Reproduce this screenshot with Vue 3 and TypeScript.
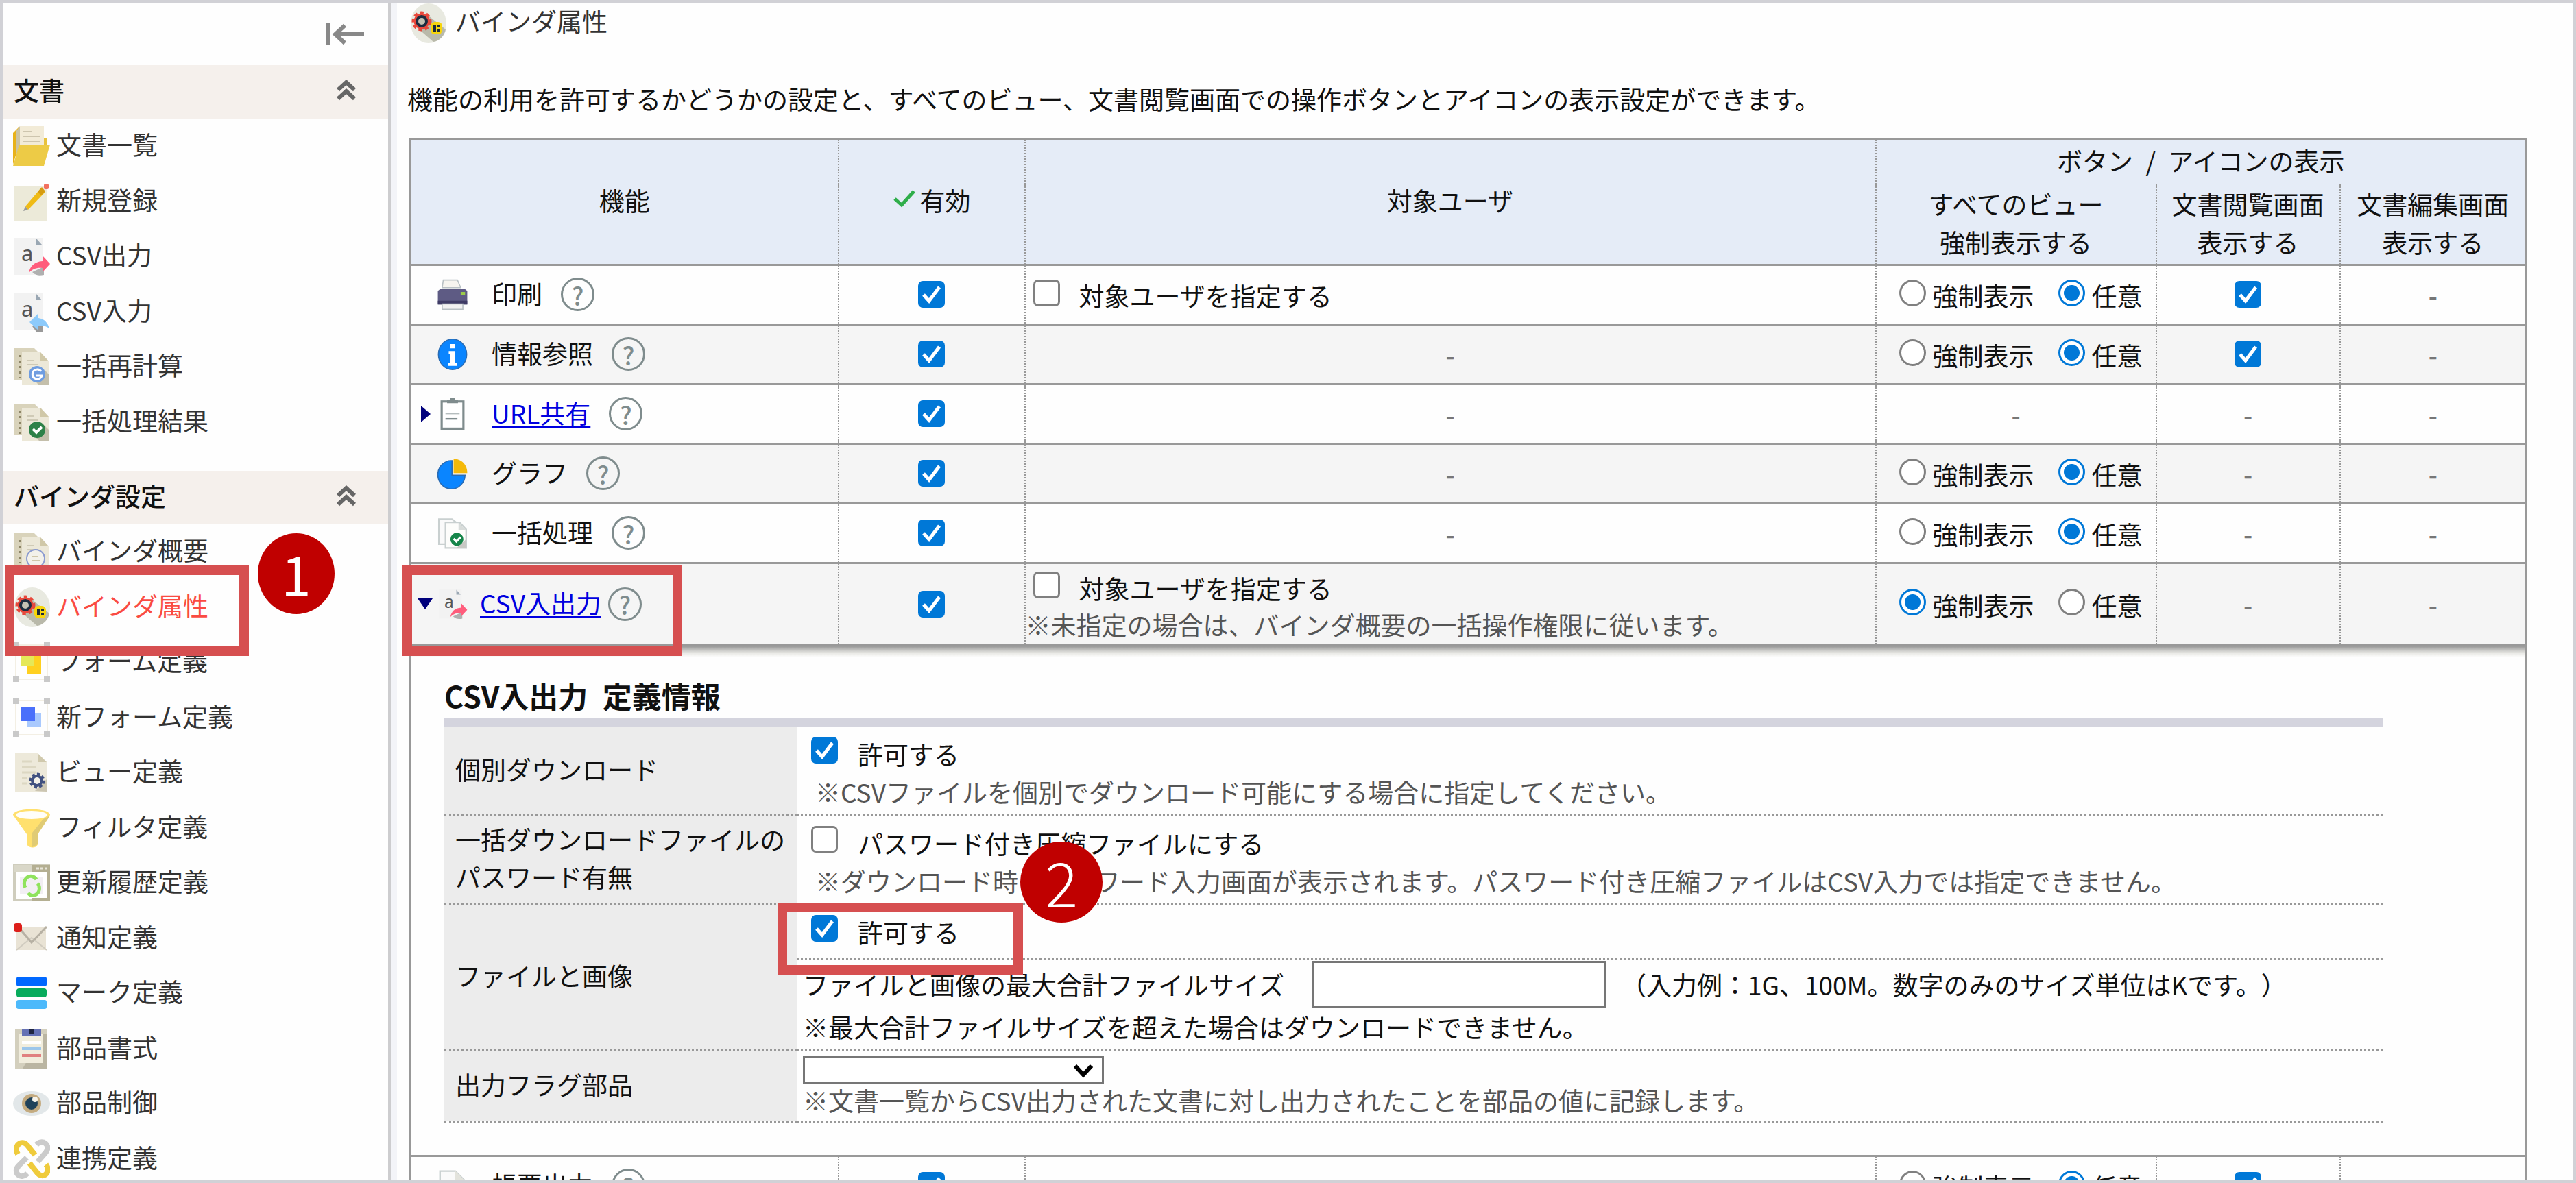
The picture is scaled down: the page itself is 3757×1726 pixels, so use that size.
<script setup lang="ts">
import { ref } from 'vue'

interface NavItem {
  label: string
  icon: string
  active?: boolean
}
interface NavGroup {
  title: string
  items: NavItem[]
}
interface Feature {
  id: string
  label: string
  icon: string
  link?: boolean
  open?: boolean
  targetable?: boolean
  note?: string
  display?: 'force' | 'free'
  viewer?: boolean
}

const docBack =
  '<path d="M2 2h29l8 8v38H2z" fill="#d9d3bb"/><path d="M13 8h27l12 13v35H13z" fill="#ece8d8"/><path d="M40 8v13h12z" fill="#d0c8a8"/><path d="M10 12v34" stroke="#8d8566" stroke-width="3" stroke-dasharray="3 5"/><path d="M20 20h11M20 26h16" stroke="#cfcab6" stroke-width="2"/>'
const page =
  '<rect x="2" y="2" width="42" height="54" fill="#f2f2f2"/><path d="M34 3l8 9h-8z" fill="#9aa7b3"/><text x="12" y="36" font-size="31" font-family="Noto Sans, sans-serif" fill="#555">a</text>'
const corners =
  '<rect x="4" y="4" width="46" height="50" fill="none" stroke="#f3efe4" stroke-width="2"/><path d="M0 0h9v9H0zM45 0h9v9h-9zM0 49h9v9H0zM45 49h9v9h-9z" fill="#c9c9c9"/>'
const csvOut =
  page + '<path d="M28 52c6 6 12 5 17 4V44z" fill="#b0b0b0"/><path d="M23 53c2-10 8-16 20-17v-8l11 12-11 12v-6c-8-1-14 1-20 7z" fill="#ff5d7c"/>'

const icons: Record<string, string> = {
  folder:
    '<path d="M0 10l8-8v28L0 56z" fill="#e8b21a"/><path d="M44 18h6v12h-6z" fill="#e8c23c"/><path d="M10 0h35v32H10z" fill="#f2ebd7"/><path d="M10 0v28l-6 16V8z" fill="#cbc3a4"/><path d="M15 8h13M15 15h25M15 22h25" stroke="#cdc5ae" stroke-width="2"/><path d="M9 27h45l-9 31H0z" fill="#edcb46"/>',
  pencil:
    '<rect x="2" y="6" width="47" height="51" fill="#ecead9"/><path d="M15 43l3-7 4 5z" fill="#999"/><path d="M18 36L41 9l6 6-25 26z" fill="#efbb16"/><path d="M36 15l6-7 5 6-6 6z" fill="#d69c12"/><rect x="45" y="3" width="7" height="8" rx="2" fill="#f2705f"/>',
  csvOut,
  csvIn:
    page + '<path d="M28 50h16v8H34z" fill="#999"/><path d="M24 44l13-13v7c9 1 14 8 16 15-6-4-10-4-16-3v6z" fill="#8ccafb"/>',
  recalc:
    docBack +
    '<path d="M34 52l12-18 6 6v16H38z" fill="#c4bfab"/><circle cx="35" cy="40" r="12" fill="#6f9de0"/><path d="M41 36a7 7 0 1 0 1 6h-8" fill="none" stroke="#fff" stroke-width="3"/>',
  result:
    docBack +
    '<path d="M34 52l12-18 6 6v16H38z" fill="#c4bfab"/><circle cx="35" cy="40" r="12" fill="#2d8148"/><path d="M29 39l5 5 8-8" fill="none" stroke="#fff" stroke-width="4"/>',
  overview:
    docBack +
    '<circle cx="33" cy="39" r="13" fill="#f3f1ea" stroke="#8b9bd0" stroke-width="2"/><path d="M27 36h9M28 42h12" stroke="#cfc6a8" stroke-width="2"/><path d="M42 48l7 8" stroke="#8b9bd0" stroke-width="3"/>',
  gear:
    '<ellipse cx="28" cy="29" rx="26" ry="29" fill="#e8e9e0"/><path d="M12 36l16-18 25 20c-1 8-9 17-18 18z" fill="#b9b9aa"/><circle cx="18" cy="26" r="12" fill="none" stroke="#e8483c" stroke-width="5" stroke-dasharray="5 4"/><circle cx="18" cy="26" r="9" fill="#c9c6b8" stroke="#e8483c" stroke-width="5"/><circle cx="18" cy="26" r="7" fill="#c4c1b3" stroke="#1c2c40" stroke-width="4"/><rect x="31" y="27" width="17" height="18" rx="6" fill="#f7d50c"/><path d="M35 31h4v10h-4zM41 31h4v4h-4zM41 37h4v4h-4z" fill="#1c2a3a"/>',
  form: corners + '<path d="M20 20h21v26H20z" fill="#ffd01f"/><path d="M12 12h19v22H12z" fill="#e5e858"/>',
  newForm: corners + '<path d="M20 22h21v20H20z" fill="#a9c9fd"/><path d="M11 13h21v21H11z" fill="#4a70fb"/>',
  view:
    '<path d="M3 1h33l13 13v43H3z" fill="#ede9da"/><path d="M36 1v13h13z" fill="#d0c9ad"/><path d="M13 13h15M13 21h20M13 29h20M13 37h8M13 45h8" stroke="#dcd7c2" stroke-width="3"/><path d="M32 56l17-17v18z" fill="#ccc6b2"/><circle cx="35" cy="41" r="9" fill="none" stroke="#415180" stroke-width="5" stroke-dasharray="4 3"/><circle cx="35" cy="41" r="7" fill="#f4f2ea" stroke="#415180" stroke-width="4"/>',
  filter:
    '<path d="M0 10c0-11 54-11 54 0L36 38v15c-2 6-12 6-16 0V38z" fill="#ffe06e"/><path d="M54 11L36 38v15l-8 4V36L44 16z" fill="#e0cb74"/><ellipse cx="27" cy="10" rx="23" ry="6" fill="#fffef8"/>',
  history:
    '<rect x="2" y="4" width="50" height="50" fill="#fff" stroke="#cfcdbd" stroke-width="4"/><path d="M1 3h53v10H1z" fill="#d9d7c8"/><path d="M28 3h26v10H28zM49 13h5v42h-5zM28 51h26v4H28z" fill="#b4af92"/><path d="M34 8h15" stroke="#e8e6da" stroke-width="3" stroke-dasharray="4 2"/><path d="M10 20h34v26H10z" fill="#f2eff3"/><path d="M18 36a9 10 0 0 1 16-12M36 30a9 10 0 0 1-14 14" fill="none" stroke="#8fe35c" stroke-width="5"/>',
  mail:
    '<path d="M4 12h44v34H4z" fill="#e9e3d5"/><path d="M5 46l22-18 22 18" fill="none" stroke="#d1ccc0" stroke-width="2"/><path d="M8 13l19 22 22-23" fill="none" stroke="#b7b1a4" stroke-width="3"/><rect x="1" y="7" width="12" height="13" rx="4" fill="#dd1f1a"/>',
  mark:
    '<rect x="5" y="5" width="44" height="14" rx="3" fill="#0068ff"/><rect x="5" y="22" width="44" height="13" rx="4" fill="#08ab5c"/><rect x="5" y="39" width="44" height="13" rx="3" fill="#4cb9fb"/>',
  format:
    '<path d="M3 1h47v57H3z" fill="#d3cfbd"/><path d="M44 7h6v51H14z" fill="#bab5a2"/><path d="M9 7h35v43H9z" fill="#f1eddd"/><path d="M13 0h28v10H13z" fill="#6571b4"/><circle cx="27" cy="4" r="4" fill="#1f2540"/><path d="M13 20h28" stroke="#fff" stroke-width="4"/><path d="M13 29h28" stroke="#9cc6ea" stroke-width="4"/><path d="M13 39h28" stroke="#e08080" stroke-width="4"/>',
  eye:
    '<ellipse cx="27" cy="29" rx="27" ry="18" fill="#e2e7e9"/><circle cx="27" cy="29" r="14" fill="#c4ab80"/><circle cx="27" cy="29" r="9" fill="#20425a"/><circle cx="32" cy="23" r="4" fill="#f6f3ea"/>',
  link:
    '<path d="M36 33L48 19c8-11-6-20-14-11" fill="none" stroke="#cbcbcb" stroke-width="8"/><path d="M20 27L8 39c-9 10 3 21 13 11" fill="none" stroke="#cbcbcb" stroke-width="8"/><path d="M7 22C0 10 12 0 20 8l12 15" fill="none" stroke="#efcb3c" stroke-width="8"/><path d="M24 35l12 15c9 9 20-3 12-13" fill="none" stroke="#efcb3c" stroke-width="8"/>',
  printer:
    '<path d="M10 2h26l6 14H8z" fill="#f6f4ef" stroke="#b8c0c4" stroke-width="2"/><path d="M5 18h44l5 4v25H0V22z" fill="#5e5b84"/><path d="M0 40h54v7H0z" fill="#3f3c66"/><rect x="42" y="24" width="8" height="6" fill="#9ccc4a"/><path d="M8 46h38v10H8z" fill="#f1f1f1" stroke="#b8c0c4" stroke-width="2"/>',
  info:
    '<ellipse cx="27" cy="29" rx="26" ry="28" fill="#0a85ff" stroke="#2a6cb4" stroke-width="2"/><path d="M22 10h9v8h-9zM20 23h11v22h4v5H19v-5h4V28h-3z" fill="#fff"/>',
  clip:
    '<rect x="7" y="6" width="40" height="50" fill="#fff" stroke="#7f8c8d" stroke-width="4"/><path d="M17 3h5V0h10v3h5v6H17z" fill="#7f8c8d"/><path d="M14 28h26" stroke="#b5bdbe" stroke-width="3"/><path d="M14 38h26" stroke="#7f8c8d" stroke-width="3" stroke-dasharray="22 4"/>',
  pie:
    '<path d="M26 5a25 26 0 1 0 24 27H26z" fill="#0a85ff" stroke="#2a6cb4" stroke-width="2"/><path d="M29 2c14 0 25 10 25 26H29z" fill="#f4b90a"/>',
  batch:
    '<path d="M2 3h24l10 8v38H2z" fill="#fafafa" stroke="#c9d0d0" stroke-width="3"/><path d="M14 9h26l12 13v34H14z" fill="#fdfdfb" stroke="#c9d0d0" stroke-width="3"/><path d="M38 9v14h13z" fill="#d8dcda"/><path d="M34 56l18-16v16z" fill="#c8c8c4"/><circle cx="35" cy="40" r="12" fill="#16864a"/><path d="M29 39l5 5 8-8" fill="none" stroke="#fff" stroke-width="4"/>',
  report:
    '<path d="M4 2h28l18 18v38H4z" fill="#fafafa" stroke="#c9d0d0" stroke-width="3"/><path d="M32 2v18h18z" fill="#e3e3dc"/>',
}

const groups: NavGroup[] = [
  {
    title: '文書',
    items: [
      { label: '文書一覧', icon: 'folder' },
      { label: '新規登録', icon: 'pencil' },
      { label: 'CSV出力', icon: 'csvOut' },
      { label: 'CSV入力', icon: 'csvIn' },
      { label: '一括再計算', icon: 'recalc' },
      { label: '一括処理結果', icon: 'result' },
    ],
  },
  {
    title: 'バインダ設定',
    items: [
      { label: 'バインダ概要', icon: 'overview' },
      { label: 'バインダ属性', icon: 'gear', active: true },
      { label: 'フォーム定義', icon: 'form' },
      { label: '新フォーム定義', icon: 'newForm' },
      { label: 'ビュー定義', icon: 'view' },
      { label: 'フィルタ定義', icon: 'filter' },
      { label: '更新履歴定義', icon: 'history' },
      { label: '通知定義', icon: 'mail' },
      { label: 'マーク定義', icon: 'mark' },
      { label: '部品書式', icon: 'format' },
      { label: '部品制御', icon: 'eye' },
      { label: '連携定義', icon: 'link' },
    ],
  },
]

const features = ref<Feature[]>([
  { id: 'print', label: '印刷', icon: 'printer', targetable: true, display: 'free', viewer: true },
  { id: 'info', label: '情報参照', icon: 'info', display: 'free', viewer: true },
  { id: 'url', label: 'URL共有', icon: 'clip', link: true },
  { id: 'graph', label: 'グラフ', icon: 'pie', display: 'free' },
  { id: 'batch', label: '一括処理', icon: 'batch', display: 'free' },
  {
    id: 'csv',
    label: 'CSV入出力',
    icon: 'csvOut',
    link: true,
    open: true,
    targetable: true,
    note: '※未指定の場合は、バインダ概要の一括操作権限に従います。',
    display: 'force',
  },
  { id: 'report', label: '帳票出力', icon: 'report', display: 'free', viewer: true },
])
</script>

<template>
  <div class="frame">
    <aside class="sidebar">
      <div class="tools">
        <button class="plain" type="button" aria-label="メニューを閉じる">
          <svg width="56" height="34" viewBox="0 0 56 34">
            <path d="M3 1v32M12 17h43M27 4L13 17l14 13" fill="none" stroke="#888" stroke-width="6" />
          </svg>
        </button>
      </div>
      <section v-for="group in groups" :key="group.title" class="group">
        <h2>
          {{ group.title }}
          <button class="plain" type="button" :aria-label="group.title + 'を折りたたむ'">
            <svg width="28" height="32" viewBox="0 0 28 32">
              <path d="M2 16L14 5l12 11M2 29l12-11 12 11" fill="none" stroke="#666" stroke-width="6" />
            </svg>
          </button>
        </h2>
        <ul>
          <li v-for="item in group.items" :key="item.label">
            <svg class="icon" viewBox="0 0 54 58" aria-hidden="true" v-html="icons[item.icon]"></svg>
            <a href="#" :class="{ active: item.active }">{{ item.label }}</a>
          </li>
        </ul>
      </section>
    </aside>

    <main class="main">
      <h1>
        <svg class="icon" viewBox="0 0 54 58" aria-hidden="true" v-html="icons.gear"></svg>
        <span>バインダ属性</span>
      </h1>
      <p class="lead">
        機能の利用を許可するかどうかの設定と、すべてのビュー、文書閲覧画面での操作ボタンとアイコンの表示設定ができます。
      </p>

      <table class="features">
        <colgroup>
          <col class="c-name" />
          <col class="c-on" />
          <col />
          <col class="c-all" />
          <col class="c-view" />
          <col class="c-edit" />
        </colgroup>
        <thead>
          <tr class="head-top">
            <th rowspan="2">機能</th>
            <th rowspan="2">
              <svg class="tick" width="34" height="28" viewBox="0 0 34 28" aria-hidden="true">
                <path d="M3 14l10 9L31 3" fill="none" stroke="#2fae4b" stroke-width="5" /></svg
              >有効
            </th>
            <th rowspan="2">対象ユーザ</th>
            <th colspan="3">ボタン&ensp;/&ensp;アイコンの表示</th>
          </tr>
          <tr class="head-sub">
            <th>すべてのビュー<br />強制表示する</th>
            <th>文書閲覧画面<br />表示する</th>
            <th>文書編集画面<br />表示する</th>
          </tr>
        </thead>
        <tbody>
          <template v-for="(f, i) in features" :key="f.id">
            <tr :class="{ alt: i % 2 === 1, tall: f.open }">
              <td>
                <div class="name" :class="{ open: f.open }">
                  <span class="twist">
                    <svg v-if="f.link && f.open" width="22" height="16" viewBox="0 0 22 16">
                      <path d="M0 0h22L11 16z" fill="#00007c" />
                    </svg>
                    <svg v-else-if="f.link" width="14" height="24" viewBox="0 0 14 24">
                      <path d="M0 0l14 12L0 24z" fill="#00007c" />
                    </svg>
                  </span>
                  <svg class="ficon" viewBox="0 0 54 58" aria-hidden="true" v-html="icons[f.icon]"></svg>
                  <a v-if="f.link" class="label" href="#">{{ f.label }}</a>
                  <span v-else class="label">{{ f.label }}</span>
                  <button class="help" type="button" :aria-label="f.label + 'のヘルプ'">?</button>
                </div>
              </td>
              <td class="center"><input type="checkbox" checked :aria-label="f.label + 'を有効にする'" /></td>
              <td v-if="f.targetable" class="target">
                <label><input type="checkbox" /><span>対象ユーザを指定する</span></label>
                <p v-if="f.note" class="note">{{ f.note }}</p>
              </td>
              <td v-else class="center dash">-</td>
              <td v-if="f.display">
                <div class="radios">
                  <label
                    ><input v-model="f.display" type="radio" :name="f.id" value="force" /><span>強制表示</span></label
                  >
                  <label><input v-model="f.display" type="radio" :name="f.id" value="free" /><span>任意</span></label>
                </div>
              </td>
              <td v-else class="center dash">-</td>
              <td v-if="f.viewer" class="center">
                <input type="checkbox" checked :aria-label="f.label + 'を文書閲覧画面に表示する'" />
              </td>
              <td v-else class="center dash">-</td>
              <td class="center dash">-</td>
            </tr>
            <tr v-if="f.open" class="detail-row">
              <td colspan="6">
                <div class="shade"></div>
                <div class="detail">
                  <h3>CSV入出力&ensp;定義情報</h3>
                  <table class="settings">
                    <tbody>
                      <tr>
                        <th scope="row">個別ダウンロード</th>
                        <td>
                          <label class="opt"><input type="checkbox" checked /><span>許可する</span></label>
                          <p class="hint">※CSVファイルを個別でダウンロード可能にする場合に指定してください。</p>
                        </td>
                      </tr>
                      <tr>
                        <th scope="row">一括ダウンロードファイルの<br />パスワード有無</th>
                        <td>
                          <label class="opt"
                            ><input type="checkbox" /><span>パスワード付き圧縮ファイルにする</span></label
                          >
                          <p class="hint">
                            ※ダウンロード時にパスワード入力画面が表示されます。パスワード付き圧縮ファイルはCSV入力では指定できません。
                          </p>
                        </td>
                      </tr>
                      <tr>
                        <th scope="row" rowspan="2">ファイルと画像</th>
                        <td class="short">
                          <label class="opt"><input type="checkbox" checked /><span>許可する</span></label>
                        </td>
                      </tr>
                      <tr>
                        <td class="size">
                          <div class="size-line">
                            <label for="max-size">ファイルと画像の最大合計ファイルサイズ</label>
                            <input id="max-size" type="text" />
                            <span>（入力例：1G、100M。数字のみのサイズ単位はKです。）</span>
                          </div>
                          <p>※最大合計ファイルサイズを超えた場合はダウンロードできません。</p>
                        </td>
                      </tr>
                      <tr>
                        <th scope="row"><label for="flag">出力フラグ部品</label></th>
                        <td class="flag">
                          <div class="select">
                            <select id="flag"></select>
                            <svg width="32" height="22" viewBox="0 0 32 22" aria-hidden="true">
                              <path d="M4 4l12 13L28 4" fill="none" stroke="#000" stroke-width="6" />
                            </svg>
                          </div>
                          <p>※文書一覧からCSV出力された文書に対し出力されたことを部品の値に記録します。</p>
                        </td>
                      </tr>
                    </tbody>
                  </table>
                </div>
              </td>
            </tr>
          </template>
        </tbody>
      </table>
    </main>

    <div class="mark-box nav-mark"></div>
    <div class="mark-box csv-mark"></div>
    <div class="mark-box file-mark"></div>
    <div class="step step-1">1</div>
    <div class="step step-2">2</div>
  </div>
</template>

<style>
body {
  overflow: hidden;
}
</style>

<style scoped>
* {
  box-sizing: border-box;
}
.frame {
  position: relative;
  display: flex;
  height: 100vh;
  overflow: hidden;
  border: 5px solid #d1d1d6;
  background: #fefefe;
  color: #111;
  font: 37px/56px 'Noto Sans CJK JP', sans-serif;
  text-spacing-trim: space-all;
}
h1,
h2,
h3,
p,
ul {
  margin: 0;
  padding: 0;
  font-size: inherit;
  font-weight: 400;
}
svg {
  display: block;
  flex: none;
}
.plain {
  padding: 0;
  border: 0;
  background: none;
}

.sidebar {
  flex: none;
  width: 574px;
  border-right: 9px solid #f3f4f8;
  box-shadow: inset -4px 0 #cdcdcf;
}
.tools {
  display: flex;
  justify-content: flex-end;
  height: 90px;
  padding: 28px 38px 0 0;
}
.tools .plain {
  height: 34px;
}
.group {
  margin-bottom: 31px;
}
.group h2 {
  display: flex;
  align-items: center;
  justify-content: space-between;
  height: 78px;
  margin-right: 4px;
  padding: 0 47px 6px 15px;
  background: #f5f0ec;
  font-weight: 500;
}
.group ul {
  list-style: none;
}
.group li {
  display: flex;
  align-items: center;
  gap: 9px;
  height: 80px;
  padding-left: 14px;
}
.group li:nth-child(even) {
  height: 81px;
}
.group a {
  padding-bottom: 6px;
  color: #333;
  text-decoration: none;
}
.group a.active {
  color: #fa4b42;
}
.icon {
  width: 54px;
  height: 58px;
}

.main {
  flex: 1;
  min-width: 0;
  padding: 0 66px 0 15px;
}
h1 {
  display: flex;
  align-items: center;
  gap: 13px;
  height: 58px;
  padding-left: 3px;
  color: #333;
}
h1 span {
  padding-bottom: 8px;
}
.lead {
  margin: 53px 0 29px;
}

.features {
  width: calc(100% - 3px);
  margin-left: 3px;
  border-collapse: collapse;
  table-layout: fixed;
  border: 3px solid #999;
}
.c-name {
  width: 624px;
}
.c-on {
  width: 272px;
}
.c-all {
  width: 409px;
}
.c-view {
  width: 268px;
}
.c-edit {
  width: 272px;
}
.features > thead th {
  padding: 0 0 4px;
  background: #e5ecf7;
  border-left: 2px dotted #999;
  font-weight: 400;
}
.head-top {
  height: 66px;
}
.head-sub {
  height: 117px;
}
.tick {
  display: inline-block;
  margin-right: 6px;
  vertical-align: 4px;
}
.features > tbody > tr {
  height: 87px;
  border-top: 3px solid #999;
}
.features > tbody > tr.alt {
  background: #f5f5f5;
}
.features > tbody > tr.tall {
  height: 120px;
}
.features > tbody > tr > td {
  padding: 0;
  border-left: 2px dotted #999;
}
.center {
  text-align: center;
}
.features .dash {
  color: #777;
  font-weight: 500;
}
input[type='checkbox'],
input[type='radio'] {
  flex: none;
  width: 39px;
  height: 39px;
  margin: 0;
  appearance: none;
  border: 3px solid #808080;
  background: #fff;
}
input[type='checkbox'] {
  border-radius: 7px;
}
input[type='checkbox']:checked {
  border: 0;
  background: #0078d7
    url("data:image/svg+xml,%3Csvg xmlns='http://www.w3.org/2000/svg' viewBox='0 0 39 39'%3E%3Cpath d='M8 20l8 9L31 9' fill='none' stroke='%23fff' stroke-width='5'/%3E%3C/svg%3E");
}
input[type='radio'] {
  border-radius: 50%;
}
input[type='radio']:checked {
  border-color: #0078d7;
  background: radial-gradient(circle, #0078d7 11px, #fff 12px);
}
.center input {
  display: block;
  margin: 0 auto;
}
.name {
  display: flex;
  align-items: center;
}
.twist {
  flex: none;
  display: flex;
  width: 38px;
  padding-left: 14px;
}
.open .twist {
  padding-left: 9px;
}
.ficon {
  width: 44px;
  height: 46px;
}
.label {
  margin: 0 27px 4px 35px;
}
a.label {
  color: #0000e0;
  text-decoration-thickness: 3px;
  text-underline-offset: 4px;
}
.open .label {
  margin: 0 10px 4px 18px;
}
.help {
  width: 49px;
  height: 49px;
  padding: 0;
  border: 3px solid #7f8c8d;
  border-radius: 50%;
  background: none;
  color: #7f8c8d;
  font: 500 36px/40px 'Noto Sans CJK JP', sans-serif;
}
.target label {
  display: flex;
  align-items: center;
  gap: 28px;
  padding-left: 11px;
}
.target label span,
.radios span {
  padding-top: 3px;
}
.target input,
.radios input {
  margin-bottom: 5px;
}
.note {
  line-height: 50px;
  color: #555;
}
.radios {
  display: flex;
  gap: 35px;
  padding-left: 33px;
}
.radios label {
  display: flex;
  align-items: center;
  gap: 10px;
}

.detail-row > td {
  vertical-align: top;
}
.shade {
  height: 16px;
  background: linear-gradient(#999, #e8e8e4 60%, #fefefe);
}
.detail {
  padding: 26px 208px 47px 48px;
}
h3 {
  height: 76px;
  border-bottom: 14px solid #d4d4de;
  font-size: 43px;
  font-weight: 700;
  line-height: 58px;
}
.settings {
  width: 100%;
  border-collapse: collapse;
  line-height: 55px;
}
.settings th {
  width: 515px;
  padding: 0 0 4px 16px;
  border-bottom: 3px dotted #999;
  background: #ececec;
  text-align: left;
  font-weight: 400;
}
.settings td {
  padding: 12px 0 5px 8px;
  border-bottom: 3px dotted #999;
}
.settings td.short {
  padding: 12px 0 9px 8px;
}
.opt {
  display: flex;
  align-items: center;
  gap: 29px;
  padding-left: 12px;
}
.opt input {
  margin-bottom: 12px;
}
.hint {
  padding-left: 18px;
  color: #555;
}
.settings td.size {
  padding: 2px 0 5px 8px;
}
.size-line {
  display: flex;
  align-items: center;
  height: 69px;
}
.size-line input {
  width: 429px;
  height: 69px;
  margin: 0 22px 0 40px;
  padding: 0 8px;
  border: 3px solid #767676;
  background: #fff;
  font: inherit;
}
.settings td.flag {
  padding: 7px 0 7px 8px;
}
.flag p {
  color: #555;
  line-height: 46px;
}
.select {
  position: relative;
  width: 439px;
  height: 41px;
}
.select select {
  display: block;
  width: 100%;
  height: 100%;
  appearance: none;
  border: 3px solid #767676;
  border-radius: 0;
  background: #fff;
  font: inherit;
}
.select svg {
  position: absolute;
  right: 14px;
  top: 10px;
  pointer-events: none;
}

.mark-box {
  position: absolute;
  border: 14px solid #d64f50;
}
.nav-mark {
  left: 2px;
  top: 820px;
  width: 356px;
  height: 132px;
}
.csv-mark {
  left: 582px;
  top: 820px;
  width: 408px;
  height: 132px;
}
.file-mark {
  left: 1129px;
  top: 1312px;
  width: 358px;
  height: 105px;
}
.step {
  position: absolute;
  display: flex;
  align-items: center;
  justify-content: center;
  height: 118px;
  padding-bottom: 4px;
  border-radius: 50%;
  background: #c00000;
  color: #fff;
  line-height: 114px;
}
.step-1 {
  left: 371px;
  top: 773px;
  width: 112px;
  font-size: 78px;
}
.step-2 {
  left: 1483px;
  top: 1223px;
  width: 120px;
  font-size: 90px;
  font-weight: 300;
}
</style>
